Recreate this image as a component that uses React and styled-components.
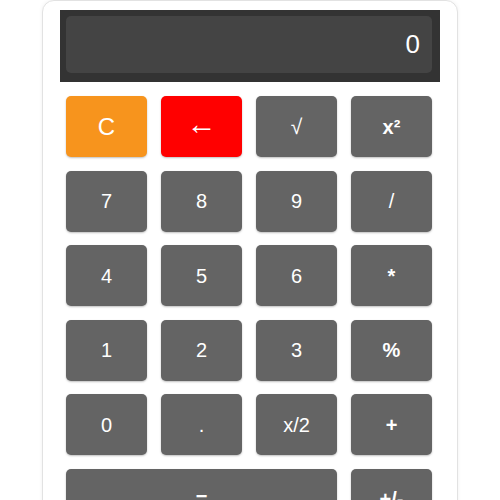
import React from "react";
import styled, { createGlobalStyle } from "styled-components";

const Global = createGlobalStyle`
  html, body { margin: 0; padding: 0; background: #ffffff; }
  body { font-family: "Liberation Sans", Arial, sans-serif; }
`;

const Card = styled.div`
  box-sizing: border-box;
  width: 416px;
  margin: 0 auto;
  padding: 9px 17px 0;
  background: #fff;
  border: 1px solid #e2e2e2;
  border-radius: 12px;
  box-shadow: 0 0 4px rgba(0, 0, 0, 0.06);
  min-height: 520px;
`;

const Display = styled.div`
  box-sizing: border-box;
  width: 380px;
  height: 72px;
  background: #333333;
  padding: 6px 8px 9px 6px;
`;

const Screen = styled.div`
  box-sizing: border-box;
  height: 100%;
  background: #444444;
  border-radius: 5px;
  display: flex;
  align-items: center;
  justify-content: flex-end;
  padding-right: 12px;
  color: #ffffff;
  font-size: 26px;
`;

const Keypad = styled.div`
  display: grid;
  grid-template-columns: repeat(4, 1fr);
  grid-auto-rows: 61px;
  column-gap: 14px;
  row-gap: 13.5px;
  width: 366px;
  margin: 14px 0 0 6px;
`;

const colors = {
  gray: "#646464",
  orange: "#f7941d",
  red: "#ff0000",
};

const Key = styled.button`
  grid-column: span ${(p) => p.$span || 1};
  border: none;
  border-radius: 5px;
  background: ${(p) => colors[p.$tone || "gray"]};
  color: #ffffff;
  font-family: "Liberation Sans", Arial, sans-serif;
  font-size: ${(p) => p.$size || 20}px;
  font-weight: ${(p) => (p.$op ? "bold" : "normal")};
  line-height: 1;
  box-shadow: 0 1px 2px rgba(0, 0, 0, 0.25);
  display: flex;
  align-items: center;
  justify-content: center;
  padding: 0 0 ${(p) => p.$lift || 0}px;
  cursor: pointer;
`;

const keys = [
  { l: "C", tone: "orange", size: 24 },
  { l: "←", tone: "red", size: 30, lift: 6 },
  { l: "√", size: 21 },
  { l: "x²", op: true },
  { l: "7" }, { l: "8" }, { l: "9" }, { l: "/" },
  { l: "4" }, { l: "5" }, { l: "6" }, { l: "*", op: true },
  { l: "1" }, { l: "2" }, { l: "3" }, { l: "%", op: true },
  { l: "0" }, { l: "." }, { l: "x/2" }, { l: "+", op: true },
  { l: "=", span: 3, op: true }, { l: "+/-", op: true },
];

export default function App() {
  return (
    <>
      <Global />
      <Card>
        <Display>
          <Screen>0</Screen>
        </Display>
        <Keypad>
          {keys.map((k, i) => (
            <Key
              key={i}
              $tone={k.tone}
              $size={k.size}
              $op={k.op}
              $span={k.span}
              $lift={k.lift}
            >
              {k.l}
            </Key>
          ))}
        </Keypad>
      </Card>
    </>
  );
}
